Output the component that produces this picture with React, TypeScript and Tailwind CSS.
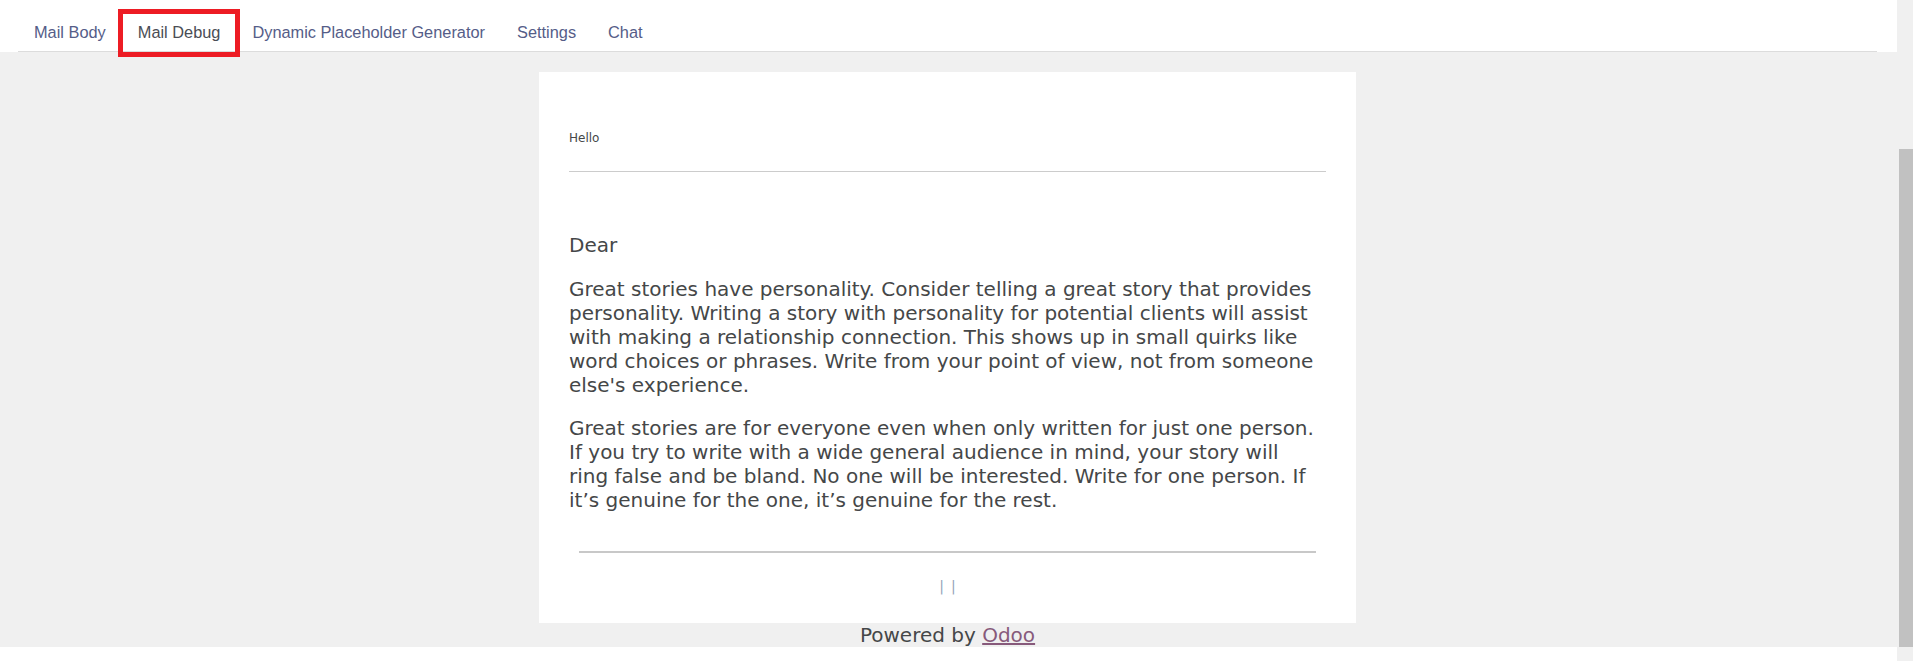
import React from "react";

const tabs = ["Mail Body", "Mail Debug", "Dynamic Placeholder Generator", "Settings", "Chat"];

export default function App() {
  return (
    <div className="flex w-[1913px] h-[661px] overflow-hidden bg-white">
      <div className="w-[1897px] flex flex-col">
        <header className="h-[52px] bg-white pt-[11px] pl-[18px] pr-[20px]">
          <nav
            className="flex border-b border-[#dcdcdc] h-[41px]"
            style={{ fontFamily: '"Liberation Sans", Arial, sans-serif' }}
          >
            {tabs.map((t) => (
              <div
                key={t}
                className={
                  t === "Mail Debug"
                    ? "relative px-4 pt-[9px] pb-[7px] text-[16.35px] leading-[24px] text-[#4a4d55] whitespace-nowrap"
                    : "relative px-4 pt-[9px] pb-[7px] text-[16.35px] leading-[24px] text-[#555d88] whitespace-nowrap"
                }
              >
                {t}
                {t === "Mail Debug" && (
                  <div className="absolute left-[-4px] right-[-4px] top-[-2px] bottom-[-6px] border-[5px] border-[#ed1c24]" />
                )}
              </div>
            ))}
          </nav>
        </header>
        <main
          className="h-[595px] bg-[#f0f0f0] flex flex-col items-center pt-[20px] pr-[2px] text-[#454748]"
          style={{ fontFamily: '"DejaVu Sans", Verdana, sans-serif' }}
        >
          <div className="w-[817px] h-[551px] bg-white px-[30px] pt-[59px] flex flex-col">
            <div className="text-[12px] leading-[14px]">Hello</div>
            <div className="mt-[26px] h-px bg-[#cccccc]" />
            <div className="mt-[61px] w-[752px] text-[20px] leading-[24px]">
              <p>Dear</p>
              <p className="mt-[20px]">
                Great stories have personality. Consider telling a great story that provides personality. Writing a story
                with personality for potential clients will assist with making a relationship connection. This shows up in
                small quirks like word choices or phrases. Write from your point of view, not from someone else's
                experience.
              </p>
              <p className="mt-[19px]">
                Great stories are for everyone even when only written for just one person. If you try to write with a wide
                general audience in mind, your story will ring false and be bland. No one will be interested. Write for one
                person. If it’s genuine for the one, it’s genuine for the rest.
              </p>
            </div>
            <div className="mt-[39px] mx-[10px] h-[2px] bg-[#c8c8c8]" />
            <div className="mt-[23px] flex justify-center gap-[7px] text-[14px] text-[#93a3b8]">
              <span>|</span>
              <span>|</span>
            </div>
          </div>
          <div className="text-[20px] leading-[24px] text-center">
            Powered by{" "}
            <a href="#" className="text-[#875a7b] underline">
              Odoo
            </a>
          </div>
        </main>
        <div className="flex-1 bg-white" />
      </div>
      <div className="w-[16px] bg-[#f0f0f0] pt-[149px] pl-[2px]">
        <div className="h-[498px] bg-[#c1c1c1]" />
      </div>
    </div>
  );
}
